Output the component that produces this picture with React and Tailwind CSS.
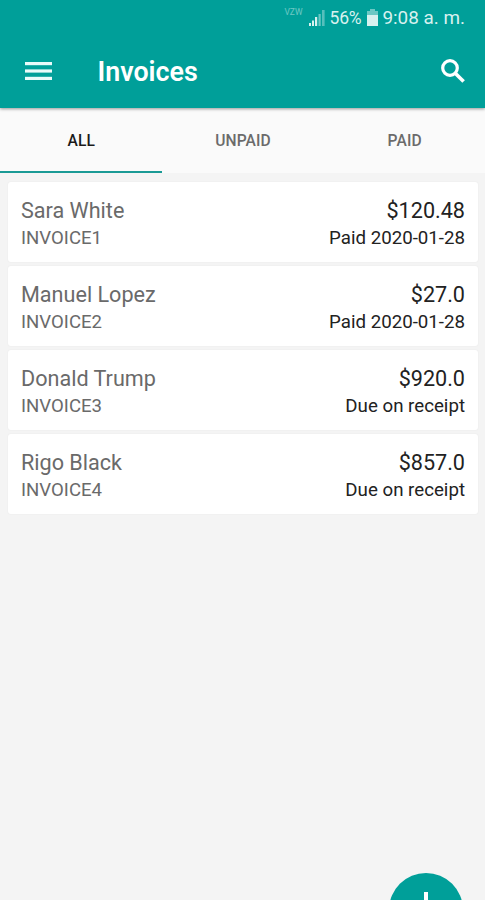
import React, { useState } from 'react'

const tabs = ['ALL', 'UNPAID', 'PAID']

const invoices = [
    { id: 'INVOICE1', name: 'Sara White', amount: '$120.48', status: 'Paid 2020-01-28', paid: true },
    { id: 'INVOICE2', name: 'Manuel Lopez', amount: '$27.0', status: 'Paid 2020-01-28', paid: true },
    { id: 'INVOICE3', name: 'Donald Trump', amount: '$920.0', status: 'Due on receipt', paid: false },
    { id: 'INVOICE4', name: 'Rigo Black', amount: '$857.0', status: 'Due on receipt', paid: false },
]

const StatusBar = () => (
    <div className='flex h-9 items-center justify-end pr-5 text-[18px] leading-none text-[#d8f1ef]'>
        <span className='mr-[6px] mb-[11px] text-[8.5px] opacity-50'>VZW</span>
        <svg className='mr-[5px] h-4 w-4' viewBox='0 0 16 16' fill='currentColor'>
            <rect x='0' y='13' width='2' height='3' />
            <rect x='3' y='10.5' width='2' height='5.5' />
            <rect x='6' y='7' width='2.2' height='9' />
            <rect x='9.5' y='4' width='2.2' height='12' opacity='0.5' />
            <rect x='13' y='0' width='2.6' height='16' opacity='0.4' />
        </svg>
        <span className='pt-px text-[17.5px] tracking-[-0.2px]'>56%</span>
        <svg className='mb-0.5 ml-[6px] mr-1 h-[17px] w-[11px]' viewBox='0 0 11 17' fill='currentColor'>
            <path d='M3 0h5v2h3v4H0V2h3z' opacity='0.5' />
            <rect x='0' y='6' width='11' height='11' />
        </svg>
        <span className='text-[18.9px]'>9:08 a. m.</span>
    </div>
)

const InvoiceCard = ({ invoice }) => (
    <li className='flex h-20 justify-between rounded-[3px] bg-white pl-[13px] pr-[13px] pt-[15px] shadow-[0_0_2px_rgba(0,0,0,0.06)]'>
        <div className='text-[#6a6a6a]'>
            <p className='text-[21.6px] leading-[27px]'>{invoice.name}</p>
            <p className='text-[18.6px] leading-[29px]'>{invoice.id}</p>
        </div>
        <div className='text-right text-[#222]'>
            <p className='text-[21.6px] leading-[27px]'>{invoice.amount}</p>
            <p className='text-[18.7px] leading-[29px]'>{invoice.status}</p>
        </div>
    </li>
)

const App = () => {

    const [activeTab, setActiveTab] = useState('ALL')

    const shown = invoices.filter((invoice) =>
        activeTab === 'ALL' || invoice.paid === (activeTab === 'PAID')
    )

    return (
        <div className="relative h-screen overflow-hidden bg-[#f4f4f4] font-['Roboto',sans-serif]">

            <header className='relative h-[108px] bg-[#009f99] shadow-[0_1px_3px_rgba(0,0,0,0.4)]'>
                <StatusBar />
                <div className='flex h-[70px] items-center pl-[25px] pr-5'>
                    <button aria-label='Menu'>
                        <svg className='h-[18px] w-[27px]' viewBox='0 0 27 18' fill='#e9fbfa'>
                            <rect width='27' height='3.2' />
                            <rect y='7.4' width='27' height='3.2' />
                            <rect y='14.8' width='27' height='3.2' />
                        </svg>
                    </button>
                    <h1 className='ml-[45.5px] flex-1 pt-0.5 text-[26.8px] font-semibold text-white'>Invoices</h1>
                    <button aria-label='Search' className='pb-px'>
                        <svg className='size-6' viewBox='0 0 24 24' fill='none' stroke='white'>
                            <circle cx='9' cy='9' r='7.3' strokeWidth='3.2' />
                            <path d='M14 14l8.6 8.6' strokeWidth='3.6' />
                        </svg>
                    </button>
                </div>
            </header>

            <nav className='grid h-[65px] grid-cols-3 bg-[#fafafa]'>
                {tabs.map((tab) => (
                    <button
                        key={tab}
                        onClick={() => setActiveTab(tab)}
                        className={`border-b-2 pl-px pt-1 text-[15.6px] font-medium tracking-[0.1px] ${activeTab === tab ? 'border-[#1a9a95] text-[#1a1a1a]' : 'border-transparent text-[#6b6b6b]'}`}
                    >
                        {tab}
                    </button>
                ))}
            </nav>

            <ul className='flex flex-col gap-[4.2px] pl-2 pr-[7px] pt-[8.7px]'>
                {shown.map((invoice) => (
                    <InvoiceCard key={invoice.id} invoice={invoice} />
                ))}
            </ul>

            <button aria-label='Add invoice' className='absolute -bottom-[47px] right-[22px] flex size-[74px] items-center justify-center rounded-full bg-[#009f99]'>
                <svg className='h-9 w-9' viewBox='0 0 36 36' stroke='white' strokeWidth='4'>
                    <path d='M18 0v36M0 18h36' />
                </svg>
            </button>

        </div>
    )
}

export default App
